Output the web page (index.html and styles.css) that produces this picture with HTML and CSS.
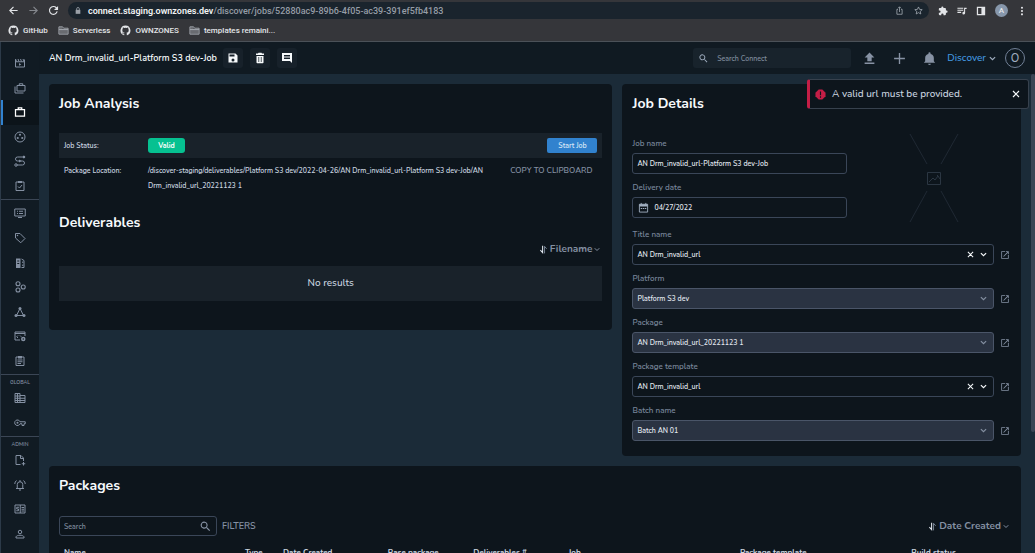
FILE: index.html
```html
<!DOCTYPE html>
<html lang="en">
<head>
  <meta charset="UTF-8">
  <meta name="viewport" content="width=device-width, initial-scale=1.0">
  <title>AN Drm_invalid_url-Platform S3 dev-Job</title>
  <link rel="stylesheet" href="styles.css">
</head>
<body>
  <svg class="sprite" aria-hidden="true">
    <symbol id="chevron" viewBox="0 0 24 24"><path d="M3 7l9 9 9-9" fill="none" stroke="currentColor" stroke-width="4"/></symbol>
    <symbol id="close" viewBox="0 0 24 24"><path d="M3 3l18 18M21 3L3 21" fill="none" stroke="currentColor" stroke-width="3.500"/></symbol>
    <symbol id="search" viewBox="0 0 24 24"><path d="M15.500 14h-.8l-.3-.3A6.500 6.500 0 1 0 13.700 14.400l.3.3v.8l5 5 1.500-1.500zM9.500 14a4.500 4.500 0 1 1 0-9 4.500 4.500 0 0 1 0 9z"/></symbol>
    <symbol id="open" viewBox="0 0 24 24"><path d="M19 19H5V5h7V3H3v18h18v-9h-2zM14 3v2h3.600l-9.800 9.800 1.400 1.400L19 6.400V10h2V3z"/></symbol>
    <symbol id="folder" viewBox="0 0 24 24"><path d="M2 4h8l2 3h10v13H2zM2 10h20" fill="none" stroke="currentColor" stroke-width="2"/><path d="M3 5h6l2 4h10v10H3z" opacity=".45"/></symbol>
    <symbol id="github" viewBox="0 0 24 24"><path d="M12 1a11 11 0 0 0-3.500 21.400c.6.1.8-.2.8-.5v-2.100c-3 .7-3.700-1.300-3.700-1.300-.5-1.300-1.200-1.600-1.200-1.600-1-.7.1-.7.1-.7 1.100.1 1.700 1.100 1.700 1.100 1 1.700 2.600 1.200 3.200.9.1-.7.4-1.200.7-1.500-2.400-.3-5-1.200-5-5.400 0-1.200.4-2.200 1.100-3-.1-.3-.5-1.400.1-2.900 0 0 .9-.3 3 1.100a10 10 0 0 1 5.500 0c2.100-1.400 3-1.100 3-1.100.6 1.500.2 2.600.1 2.900.7.800 1.100 1.800 1.100 3 0 4.200-2.600 5.100-5 5.400.4.3.8 1 .8 2v3c0 .3.2.7.8.6A11 11 0 0 0 12 1z"/></symbol>
    <symbol id="sort" viewBox="0 0 20 24"><path d="M7.500 1v19M1 14l6.500 7V14" fill="none" stroke="#e2e8f0" stroke-width="3"/><path d="M13 23V3l6 7" fill="none" stroke="currentColor" stroke-width="2.500"/></symbol>
  </svg>

  <div class="browser">
    <div class="toolbar">
      <button class="nav-btn" aria-label="Back"><svg viewBox="0 0 24 24"><path d="M21 12H4M12 4l-8 8 8 8" fill="none" stroke="currentColor" stroke-width="2.500"/></svg></button>
      <button class="nav-btn muted" aria-label="Forward"><svg viewBox="0 0 24 24"><path d="M3 12h17M12 4l8 8-8 8" fill="none" stroke="currentColor" stroke-width="2.500"/></svg></button>
      <button class="nav-btn" aria-label="Reload"><svg viewBox="0 0 24 24"><path d="M20 14a8.500 8.500 0 1 1-2-8l2 2" fill="none" stroke="currentColor" stroke-width="2.500"/><path d="M22 2v9h-9z"/></svg></button>
      <div class="address">
        <svg class="lock" viewBox="0 0 24 24"><path d="M5 10h14v12H5z"/><path d="M8 11V7a4 4 0 0 1 8 0v4" fill="none" stroke="currentColor" stroke-width="2.500"/></svg>
        <span class="url"><b>connect.staging.ownzones.dev</b>/discover/jobs/52880ac9-89b6-4f05-ac39-391ef5fb4183</span>
        <button class="nav-btn soft" aria-label="Share"><svg viewBox="0 0 24 24"><path d="M8 9H5v13h14V9h-3M12 16V3M8 6l4-4 4 4" fill="none" stroke="currentColor" stroke-width="2"/></svg></button>
        <button class="nav-btn soft" aria-label="Bookmark"><svg viewBox="0 0 24 24"><path d="M12 2.500l2.900 6.500 7 .7-5.300 4.700 1.600 7-6.200-3.700-6.200 3.700 1.600-7L2.100 9.700l7-.7z" fill="none" stroke="currentColor" stroke-width="2"/></svg></button>
      </div>
      <div class="extensions">
        <button class="nav-btn" aria-label="Extensions"><svg viewBox="0 0 24 24"><path d="M20.500 11H19V7a2 2 0 0 0-2-2h-4V3.500a2.500 2.500 0 0 0-5 0V5H4a2 2 0 0 0-2 2v3.800h1.500a2.700 2.700 0 0 1 0 5.400H2V20c0 1.100.9 2 2 2h3.800v-1.500a2.700 2.700 0 0 1 5.400 0V22H17a2 2 0 0 0 2-2v-4h1.500a2.500 2.500 0 0 0 0-5z"/></svg></button>
        <button class="nav-btn" aria-label="Media controls"><svg viewBox="0 0 24 24"><path d="M1 4h14v2.500H1zM1 9h14v2.500H1zM1 14h9v2.500H1zM17 4h6v3h-3.500v10a3.300 3.300 0 1 1-2.500-3z"/></svg></button>
        <button class="nav-btn" aria-label="Side panel"><svg viewBox="0 0 24 24"><path d="M2 2h20v20H2zM5 5v14h8V5z" fill-rule="evenodd"/></svg></button>
        <button class="profile" aria-label="Profile">A</button>
        <button class="nav-btn" aria-label="Menu"><svg viewBox="0 0 24 24"><circle cx="12" cy="4" r="2.500"/><circle cx="12" cy="12" r="2.500"/><circle cx="12" cy="20" r="2.500"/></svg></button>
      </div>
    </div>
    <div class="bookmarks">
      <a href="#"><svg><use href="#github"/></svg>GitHub</a>
      <a href="#"><svg class="folder"><use href="#folder"/></svg>Serverless</a>
      <a href="#"><svg><use href="#github"/></svg>OWNZONES</a>
      <a href="#"><svg class="folder"><use href="#folder"/></svg>templates remaini...</a>
    </div>
  </div>

  <div class="app">
    <nav class="sidebar">
      <a href="#" aria-label="Titles"><svg viewBox="0 0 24 24"><path d="M3 5v15h18V5M3 9.500h18M3 4l2 5M8 4l2 5M13 4l2 5M18 4l2 5" fill="none" stroke="currentColor" stroke-width="2"/><path d="M10 12v5.500l4.500-2.700z"/></svg></a>
      <a href="#" aria-label="Batches"><svg viewBox="0 0 24 24"><path d="M6 7h16v11H6zM10.500 7V3.500h7V7M2 9v13h17" fill="none" stroke="currentColor" stroke-width="2"/></svg></a>
      <a href="#" class="active" aria-label="Jobs"><svg viewBox="0 0 24 24"><path d="M3 7h18v13H3zM8.500 7V3.500h7V7" fill="none" stroke="currentColor" stroke-width="2.500"/></svg></a>
      <a href="#" aria-label="Workers"><svg viewBox="0 0 24 24"><circle cx="12" cy="12" r="10" fill="none" stroke="currentColor" stroke-width="2"/><circle cx="12" cy="7.500" r="2.200"/><circle cx="7.500" cy="14" r="2.200"/><circle cx="16.500" cy="14" r="2.200"/></svg></a>
      <a href="#" aria-label="Workflows"><svg viewBox="0 0 24 24"><path d="M19 4H7a4 4 0 0 0 0 8h10a4 4 0 0 1 0 8H5" fill="none" stroke="currentColor" stroke-width="2"/><path d="M18 1l4 3-4 3zM10 9l5 3-5 3z"/><circle cx="4" cy="20" r="2.500" fill="none" stroke="currentColor" stroke-width="2"/><circle cx="20" cy="4" r="2.500"/></svg></a>
      <a href="#" aria-label="Tasks"><svg viewBox="0 0 24 24"><path d="M4 4h16v17H4zM8 13l3 3 5-6" fill="none" stroke="currentColor" stroke-width="2"/><path d="M8 2h8v4H8z"/></svg></a>
      <hr>
      <a href="#" aria-label="Platforms"><svg viewBox="0 0 24 24"><path d="M1.500 4h21v14h-21zM8 21h8M6 8.500h2M10 8.500h8M6 13h2M10 13h8" fill="none" stroke="currentColor" stroke-width="2"/></svg></a>
      <a href="#" aria-label="Tags"><svg viewBox="0 0 24 24"><path d="M3 3h9l10 10-8.500 8.500L3 12z" fill="none" stroke="currentColor" stroke-width="2"/><circle cx="7" cy="7" r="1.500"/></svg></a>
      <a href="#" aria-label="Storage"><svg viewBox="0 0 24 24"><path d="M4 3h9v19H4zM6.500 7v2h4V7zM6.500 12v2h4v-2z" fill-rule="evenodd"/><path d="M15 4l5 3v14h-5M17.500 9v3M17.500 15v3" fill="none" stroke="currentColor" stroke-width="2"/></svg></a>
      <a href="#" aria-label="Groups"><svg viewBox="0 0 24 24"><g fill="none" stroke="currentColor" stroke-width="2.200"><circle cx="8" cy="5.500" r="4"/><circle cx="8" cy="18" r="4"/><circle cx="18.500" cy="12" r="4"/></g></svg></a>
      <a href="#" aria-label="Connections"><svg viewBox="0 0 24 24"><path d="M12 5l-7 14h14z" fill="none" stroke="currentColor" stroke-width="2"/><circle cx="12" cy="5" r="3"/><circle cx="4" cy="19" r="3"/><circle cx="20" cy="19" r="3"/></svg></a>
      <a href="#" aria-label="Templates"><svg viewBox="0 0 24 24"><path d="M12 20H2V4h20v8M2 7h20M8 11l-2.500 2.500L8 16M12 11l2.500 2.500" fill="none" stroke="currentColor" stroke-width="2"/><circle cx="18.500" cy="18" r="3" fill="none" stroke="currentColor" stroke-width="3"/></svg></a>
      <a href="#" aria-label="Reports"><svg viewBox="0 0 24 24"><path d="M4 4h16v17H4zM7 10h10M7 13.500h10M7 17h7" fill="none" stroke="currentColor" stroke-width="2"/><path d="M8 2h8v5H8z"/></svg></a>
      <hr>
      <span class="nav-label">GLOBAL</span>
      <a href="#" aria-label="Organizations"><svg viewBox="0 0 24 24"><path d="M2 3h10v4h10v14H2zM2 8h10M2 12.500h20M2 17h20M7 3v18M12 7v14" fill="none" stroke="currentColor" stroke-width="2"/></svg></a>
      <a href="#" aria-label="Keys"><svg viewBox="0 0 24 24"><path d="M12 9.500h10.500v4H20V17h-4v-3.500h-4a5.500 5.500 0 1 1 0-4z" fill="none" stroke="currentColor" stroke-width="2"/><circle cx="7" cy="11.500" r="2"/></svg></a>
      <hr>
      <span class="nav-label">ADMIN</span>
      <a href="#" aria-label="New file"><svg viewBox="0 0 24 24"><path d="M13 21H4V3h10l5 5v6M13 3v6h6M19 16v7M15.500 19.500h7" fill="none" stroke="currentColor" stroke-width="2"/></svg></a>
      <a href="#" aria-label="Alerts"><svg viewBox="0 0 24 24"><path d="M4 19h16M6.500 19v-8a5.500 5.500 0 0 1 11 0v8M12 2v4M10 22h4M5 3a9 9 0 0 0-3.500 7M19 3a9 9 0 0 1 3.500 7" fill="none" stroke="currentColor" stroke-width="2"/></svg></a>
      <a href="#" aria-label="Billing"><svg viewBox="0 0 24 24"><path d="M2 4h20v16H2zM12.500 4v16M15 9h5M15 12.500h5M15 16h5M10 8.500H5.500V12H9v3.500H4.500" fill="none" stroke="currentColor" stroke-width="2"/></svg></a>
      <a href="#" aria-label="Users"><svg viewBox="0 0 24 24"><circle cx="12" cy="8" r="3.500" fill="none" stroke="currentColor" stroke-width="2"/><path d="M4 20v-2.500c2-4 14-4 16 0V20z" fill="none" stroke="currentColor" stroke-width="2"/></svg></a>
    </nav>

    <div class="page">
      <header class="topbar">
        <h1>AN Drm_invalid_url-Platform S3 dev-Job</h1>
        <div class="actions">
          <button aria-label="Save"><svg viewBox="0 0 24 24"><path d="M17 3H3v18h18V7zM12 19a3 3 0 1 1 0-6 3 3 0 0 1 0 6zM15 9H5V5h10z"/></svg></button>
          <button aria-label="Delete"><svg viewBox="0 0 24 24"><path d="M5 21c0 1 1 1.500 2 1.500h10c1 0 2-.5 2-1.500V8H5z"/><path d="M9.500 10v10M14.500 10v10" stroke="#17212a" stroke-width="1.500"/><path d="M20 3h-4l-1-1.500H9L8 3H4v3h16z"/></svg></button>
          <button aria-label="Comments"><svg viewBox="0 0 24 24"><path d="M22 2H2v16h16l4 4zM18 14H6v-2h12zm0-3H6V9h12zm0-3H6V6h12z"/></svg></button>
        </div>
        <label class="top-search">
          <svg><use href="#search"/></svg>
          <input type="text" placeholder="Search Connect" aria-label="Search Connect">
        </label>
        <div class="top-icons">
          <button aria-label="Upload"><svg viewBox="0 0 24 24"><path d="M8 17h8v-7h5l-9-9-9 9h5zM3 19.500h18V22H3z"/></svg></button>
          <button aria-label="Add"><svg viewBox="0 0 24 24"><path d="M12 2v20M2 12h20" stroke="currentColor" stroke-width="2.500"/></svg></button>
          <button aria-label="Notifications"><svg viewBox="0 0 24 24"><path d="M12 24a2.500 2.500 0 0 0 2.500-2.500h-5A2.500 2.500 0 0 0 12 24zM20 17v-6c0-4-2-6.500-6-7.500V2.500a2 2 0 0 0-4 0v1C6 4.500 4 7 4 11v6l-2.500 3h21z"/></svg></button>
        </div>
        <button class="discover">Discover <svg><use href="#chevron"/></svg></button>
        <button class="avatar" aria-label="Account">O</button>
      </header>

      <main class="content">
        <section class="card analysis">
          <h2>Job Analysis</h2>
          <div class="info-row shaded">
            <span>Job Status:</span>
            <span><span class="badge">Valid</span></span>
            <button class="start">Start Job</button>
          </div>
          <div class="info-row">
            <span>Package Location:</span>
            <span class="location">/discover-staging/deliverables/Platform S3 dev/2022-04-26/AN Drm_invalid_url-Platform S3 dev-Job/AN Drm_invalid_url_20221123 1</span>
            <button class="copy">COPY TO CLIPBOARD</button>
          </div>
          <h2 class="deliverables">Deliverables</h2>
          <button class="sort"><svg><use href="#sort"/></svg>Filename<svg class="caret"><use href="#chevron"/></svg></button>
          <div class="empty">No results</div>
        </section>

        <section class="card details">
          <h2>Job Details</h2>
          <div class="summary">
            <div class="fields">
              <div class="field">
                <label for="jobName">Job name</label>
                <input id="jobName" type="text" value="AN Drm_invalid_url-Platform S3 dev-Job">
              </div>
              <div class="field">
                <label for="deliveryDate">Delivery date</label>
                <div class="date-box">
                  <svg viewBox="0 0 24 24"><path d="M3 5h18v17H3zM7 2v4M17 2v4" fill="none" stroke="currentColor" stroke-width="2"/><path d="M3 5h18v5H3zM6 13h3v2H6zM10.500 13h3v2h-3zM15 13h3v2h-3z"/></svg>
                  <input id="deliveryDate" type="text" value="04/27/2022">
                </div>
              </div>
            </div>
            <svg class="poster" viewBox="0 0 50 90"><g fill="none" stroke="currentColor"><path d="M1 1l17 30M49 1L32 31M1 89l17-31M49 89L32 58" opacity=".6"/><path d="M18.500 39.500h13v12h-13zM20 49l4-4 2 2 3-4 2 3M28.500 42v1"/></g></svg>
          </div>

          <div class="field">
            <label for="titleName">Title name</label>
            <div class="select-row">
              <div class="select-box">
                <select id="titleName"><option>AN Drm_invalid_url</option></select>
                <div class="marks"><button aria-label="Clear title"><svg><use href="#close"/></svg></button><svg><use href="#chevron"/></svg></div>
              </div>
              <a href="#" aria-label="Open title"><svg><use href="#open"/></svg></a>
            </div>
          </div>
          <div class="field">
            <label for="platform">Platform</label>
            <div class="select-row">
              <div class="select-box locked">
                <select id="platform"><option>Platform S3 dev</option></select>
                <div class="marks"><svg><use href="#chevron"/></svg></div>
              </div>
              <a href="#" aria-label="Open platform"><svg><use href="#open"/></svg></a>
            </div>
          </div>
          <div class="field">
            <label for="package">Package</label>
            <div class="select-row">
              <div class="select-box locked">
                <select id="package"><option>AN Drm_invalid_url_20221123 1</option></select>
                <div class="marks"><svg><use href="#chevron"/></svg></div>
              </div>
              <a href="#" aria-label="Open package"><svg><use href="#open"/></svg></a>
            </div>
          </div>
          <div class="field">
            <label for="template">Package template</label>
            <div class="select-row">
              <div class="select-box">
                <select id="template"><option>AN Drm_invalid_url</option></select>
                <div class="marks"><button aria-label="Clear template"><svg><use href="#close"/></svg></button><svg><use href="#chevron"/></svg></div>
              </div>
              <a href="#" aria-label="Open template"><svg><use href="#open"/></svg></a>
            </div>
          </div>
          <div class="field">
            <label for="batch">Batch name</label>
            <div class="select-row">
              <div class="select-box locked">
                <select id="batch"><option>Batch AN 01</option></select>
                <div class="marks"><svg><use href="#chevron"/></svg></div>
              </div>
              <a href="#" aria-label="Open batch"><svg><use href="#open"/></svg></a>
            </div>
          </div>
        </section>

        <section class="card packages">
          <h2>Packages</h2>
          <div class="filter-bar">
            <label class="pkg-search">
              <input type="text" placeholder="Search" aria-label="Search packages">
              <svg><use href="#search"/></svg>
            </label>
            <button class="filters">FILTERS</button>
            <button class="sort"><svg><use href="#sort"/></svg>Date Created<svg class="caret"><use href="#chevron"/></svg></button>
          </div>
          <table>
            <colgroup>
              <col class="c-name"><col class="c-type"><col class="c-date"><col class="c-base"><col class="c-count"><col class="c-job"><col class="c-template"><col>
            </colgroup>
            <thead>
              <tr>
                <th>Name</th>
                <th>Type</th>
                <th>Date Created</th>
                <th>Base package</th>
                <th>Deliverables #</th>
                <th>Job</th>
                <th>Package template</th>
                <th>Build status</th>
              </tr>
            </thead>
          </table>
        </section>
      </main>

      <div class="scrollbar"></div>

      <div class="toast" role="alert">
        <svg class="alert-icon" viewBox="0 0 24 24"><path d="M8 1h8l7 7v8l-7 7H8l-7-7V8z"/><path d="M12 5.500v8M12 16v3" stroke="#0d151c" stroke-width="2.500"/></svg>
        <span>A valid url must be provided.</span>
        <button aria-label="Dismiss"><svg><use href="#close"/></svg></button>
      </div>
    </div>
  </div>
</body>
</html>
```
FILE: styles.css
```css
* {
  box-sizing: border-box;
}

body {
  margin: 0;
  height: 100vh;
  display: flex;
  flex-direction: column;
  overflow: hidden;
  background: #1b2b38;
  color: #cbd5e0;
  font-family: Nunito, Lato, sans-serif;
  font-size: 7px;
  font-weight: 600;
}

svg {
  display: block;
  flex: none;
  fill: currentColor;
}

.sprite {
  position: absolute;
  width: 0;
  height: 0;
}

button, input, select {
  font: inherit;
  color: inherit;
  background: none;
  border: 0;
  padding: 0;
  margin: 0;
}

button {
  cursor: pointer;
}

a {
  color: inherit;
  text-decoration: none;
}

h1, h2 {
  margin: 0;
  color: #f7fafc;
}

/* Browser bar */
.browser {
  flex: none;
  height: 42px;
  background: #35363a;
  border-bottom: 1px solid #4b5158;
  color: #e3e5e8;
  font-family: Roboto, sans-serif;
  font-weight: 500;
}

.toolbar {
  display: flex;
  align-items: center;
  height: 20px;
  padding: 1px 8px 0;
  gap: 9px;
}

.nav-btn svg {
  width: 11px;
  height: 11px;
}

.muted {
  color: #85888e;
}

.soft {
  color: #a9b0b8;
}

.address {
  flex: 1;
  display: flex;
  align-items: center;
  gap: 10px;
  height: 17px;
  padding: 0 6px;
  border-radius: 9px;
  background: #1a242d;
}

.nav-btn.soft svg, .lock {
  width: 9px;
  height: 9px;
}

.lock {
  width: 8px;
  color: #9aa0a8;
  margin-right: -4px;
}

.url {
  flex: 1;
  font-size: 9px;
  line-height: 14px;
  color: #969da6;
  white-space: nowrap;
}

.url b {
  font-weight: 600;
  color: #f1f3f4;
}

.extensions {
  display: flex;
  align-items: center;
  gap: 9px;
}

.extensions .nav-btn svg {
  width: 10px;
  height: 10px;
}

.profile {
  width: 13px;
  height: 13px;
  border-radius: 50%;
  background: #8797ab;
  font-size: 8px;
}

.bookmarks {
  display: flex;
  align-items: center;
  gap: 10px;
  height: 21px;
  padding: 0 8px;
  font-size: 8px;
}

.bookmarks a {
  display: flex;
  align-items: center;
  gap: 4px;
}

.bookmarks svg {
  width: 11px;
  height: 11px;
}

.bookmarks .folder {
  color: #a9adb3;
}

/* App frame */
.app {
  flex: 1;
  min-height: 0;
  display: flex;
}

.sidebar {
  flex: none;
  width: 39px;
  display: flex;
  flex-direction: column;
  padding: 9px 0 7px;
  border-left: 1px solid #2c3a48;
  background: #111b23;
  color: #8490a2;
}

.sidebar a {
  flex: 1;
  display: flex;
  align-items: center;
  justify-content: center;
}

.sidebar a svg {
  width: 12px;
  height: 12px;
}

.sidebar .active {
  background: #0c141a;
  color: #fff;
  box-shadow: inset 2px 0 #3182ce;
}

.sidebar hr {
  width: 100%;
  margin: 1px 0;
  border: 0;
  border-top: 1px solid #3b4655;
}

.nav-label {
  height: 10px;
  font-size: 5px;
  line-height: 14px;
  text-align: center;
}

.page {
  position: relative;
  flex: 1;
  min-width: 0;
  display: flex;
  flex-direction: column;
}

.topbar {
  flex: none;
  display: flex;
  align-items: center;
  height: 32px;
  padding: 0 10px;
  background: #101a22;
}

.topbar h1 {
  font-size: 9px;
  font-weight: 600;
  white-space: nowrap;
}

.actions {
  display: flex;
  gap: 7px;
  margin-left: 6px;
}

.actions button {
  display: grid;
  place-items: center;
  width: 20px;
  height: 20px;
  border-radius: 3px;
  background: #17212a;
  color: #f7fafc;
}

.actions svg {
  width: 12px;
  height: 12px;
}

.top-search {
  display: flex;
  align-items: center;
  gap: 8px;
  width: 158px;
  height: 20px;
  padding: 0 5px;
  margin-left: auto;
  border-radius: 3px;
  background: #18232c;
}

.top-search svg {
  width: 11px;
  height: 11px;
  color: #a0aec0;
}

.top-search input {
  flex: 1;
  min-width: 0;
}

input {
  outline-color: #3182ce;
}

input::placeholder {
  color: #7f8b9c;
}

.top-icons {
  display: flex;
  gap: 17px;
  margin-left: 12px;
  color: #8792a4;
}

.top-icons svg {
  width: 13px;
  height: 13px;
}

.discover {
  display: flex;
  align-items: center;
  gap: 3px;
  margin-left: 11px;
  font-size: 10px;
  font-weight: 500;
  color: #4299e1;
}

.discover svg {
  width: 7px;
  height: 7px;
  color: #a0aec0;
}

.avatar {
  width: 20px;
  height: 20px;
  margin-left: 9px;
  border: 1px solid #718096;
  border-radius: 50%;
  font-size: 11px;
  font-weight: 500;
  color: #a0aec0;
}

/* Cards */
.content {
  flex: 1;
  min-height: 0;
  display: grid;
  grid-template-columns: 41fr 29fr;
  align-items: start;
  align-content: start;
  gap: 10px;
  padding: 10px 14px 0 10px;
  overflow: hidden;
}

.card {
  min-width: 0;
  padding: 10px;
  border-radius: 4px;
  background: #0d151c;
}

.card h2 {
  font-size: 14px;
  line-height: 20px;
  font-weight: 700;
}

.analysis {
  padding-bottom: 29px;
}

.info-row {
  display: grid;
  grid-template-columns: 84px 1fr auto;
  align-items: start;
  padding: 5px;
  line-height: 15px;
}

.shaded {
  margin-top: 19px;
  background: #19222a;
}

.badge {
  display: inline-block;
  width: 37px;
  border-radius: 3px;
  background: #06c191;
  color: #fff;
  font-weight: 700;
  text-align: center;
}

.start {
  width: 50px;
  height: 15px;
  border-radius: 2px;
  background: #3182ce;
  color: #dbe9f7;
}

.copy {
  padding: 0 5px;
  margin-left: 12px;
  font-size: 8px;
  line-height: 15px;
  color: #8490a2;
}

.card .deliverables {
  margin-top: 15px;
}

.sort {
  display: flex;
  align-items: center;
  gap: 3px;
  margin: 8px 2px 9px auto;
  font-size: 10px;
  line-height: 16px;
  font-weight: 700;
  color: #8490a2;
}

.sort svg {
  width: 7px;
  height: 9px;
}

.sort .caret {
  width: 6px;
  margin-left: -1px;
}

.empty {
  background: #19222a;
  font-size: 10px;
  font-weight: 500;
  line-height: 35px;
  text-align: center;
}

/* Job details form */
.details {
  padding-bottom: 15px;
}

.summary {
  display: grid;
  grid-template-columns: 7fr 5fr;
  align-items: center;
  gap: 10px;
  margin-top: 24px;
}

.poster {
  width: 50px;
  height: 90px;
  margin: -5px 0;
  justify-self: center;
  color: #2b3642;
}

.field label {
  display: block;
  padding-bottom: 4px;
  font-size: 8px;
  line-height: 11px;
  font-weight: 600;
  color: #78859a;
}

.field + .field {
  margin-top: 8px;
}

.summary + .field {
  margin-top: 11px;
}

.field input, .field select {
  display: block;
  width: 100%;
  height: 21px;
  padding: 0 4px;
  border: 1px solid #3a4658;
  border-radius: 3px;
  color: #e2e8f0;
}

.date-box {
  position: relative;
}

.date-box svg {
  position: absolute;
  left: 6px;
  top: 5px;
  width: 11px;
  height: 11px;
  color: #a0aec0;
}

.date-box input {
  padding-left: 21px;
}

.select-row {
  display: flex;
  align-items: center;
  gap: 6px;
  padding-right: 1px;
  color: #8490a2;
}

.select-row a svg {
  width: 10px;
  height: 10px;
}

.select-box {
  position: relative;
  flex: 1;
}

.field select {
  appearance: none;
}

.field .locked select {
  background: #2a3342;
  border-color: #4a5568;
}

.marks {
  position: absolute;
  top: 0;
  right: 7px;
  height: 100%;
  display: flex;
  align-items: center;
  gap: 6px;
  color: #f7fafc;
  pointer-events: none;
}

.marks button {
  pointer-events: auto;
}

.marks svg {
  width: 7px;
  height: 7px;
}

.locked .marks {
  color: #8490a2;
}

/* Packages */
.packages {
  grid-column: 1 / -1;
}

.filter-bar {
  display: flex;
  align-items: center;
  gap: 5px;
  margin-top: 20px;
}

.pkg-search {
  display: flex;
  align-items: center;
  width: 158px;
  height: 20px;
  padding: 0 4px;
  border: 1px solid #3a4658;
  border-radius: 3px;
}

.pkg-search input {
  flex: 1;
  min-width: 0;
}

.pkg-search svg {
  width: 13px;
  height: 13px;
  color: #8490a2;
}

.filters {
  font-size: 9px;
  color: #8490a2;
}

.filter-bar .sort {
  margin: 0 2px 0 auto;
}

table {
  width: 100%;
  margin-top: 10px;
  table-layout: fixed;
  border-collapse: collapse;
}

th {
  padding: 0 5px;
  font-size: 8px;
  line-height: 14px;
  text-align: left;
  white-space: nowrap;
}

.c-name {
  width: 19%;
}

.c-type {
  width: 4%;
}

.c-date {
  width: 11%;
}

.c-base {
  width: 9%;
}

.c-count {
  width: 10%;
}

.c-job, .c-template {
  width: 18%;
}

.scrollbar {
  position: absolute;
  top: 32px;
  right: 0;
  width: 4px;
  height: 70%;
  border-radius: 2px;
  background: #3b4655;
}

.toast {
  position: absolute;
  top: 37px;
  right: 6px;
  display: flex;
  align-items: center;
  gap: 6px;
  width: 222px;
  height: 30px;
  padding: 0 8px 0 5px;
  border: 1px solid #37414d;
  border-left: 3px solid #c41e46;
  border-radius: 3px;
  background: #0d151c;
  font-size: 10px;
  font-weight: 500;
}

.alert-icon {
  width: 11px;
  height: 11px;
  color: #c41e46;
}

.toast button {
  margin-left: auto;
  color: #f7fafc;
}

.toast button svg {
  width: 8px;
  height: 8px;
}
```
